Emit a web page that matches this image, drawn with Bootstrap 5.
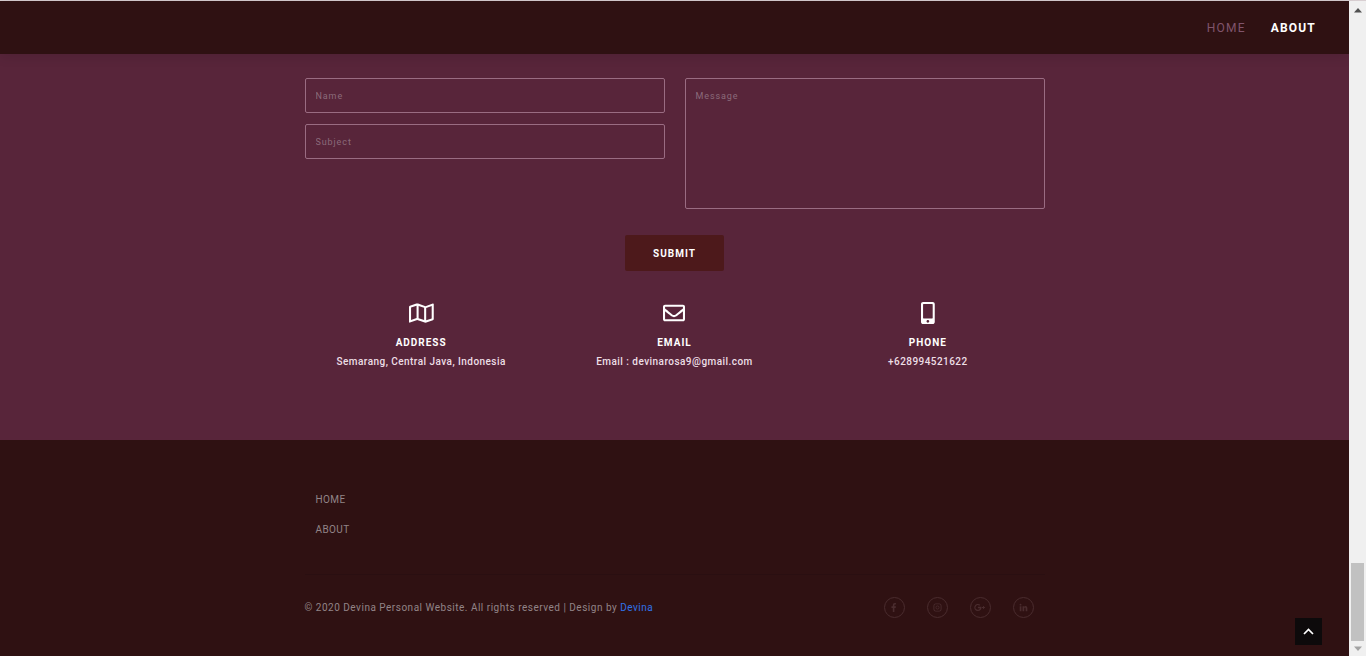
<!DOCTYPE html>
<html lang="en">
<head>
<meta charset="utf-8">
<meta name="viewport" content="width=device-width, initial-scale=1">
<title>Devina Personal Website</title>
<link rel="stylesheet" href="https://cdn.jsdelivr.net/npm/bootstrap@5.3.0/dist/css/bootstrap.min.css">
<style>
  body { font-family: Roboto, sans-serif; font-size: 10px; line-height: 20px; background: #2f1112; overflow: hidden; }
  a { text-decoration: none; }
  .window { border-top: 1px solid #d9cfd2; }
  .top-nav { background: #2f1112; padding: 17px 33px 15px 0; gap: 25px; box-shadow: 0 2px 12px rgba(0, 0, 0, .12); z-index: 2; }
  .top-nav a { font-size: 12px; line-height: 21px; letter-spacing: .1em; padding: 0; color: #80546c; }
  .top-nav a.active { color: #fff; font-weight: 700; }
  .contact { background: #58253a; padding: 24px 0 69px; }
  .wrap { max-width: 760px; padding: 0 10px; }
  .form-columns { gap: 20px; }
  .fields { gap: 11px; }
  .contact .form-control { background: transparent; border: 1px solid #9a6c82; border-radius: 2px; color: #fff; font-size: 9px; line-height: 15px; letter-spacing: .1em; padding: 10px 10px 8px; min-height: 35px; }
  .contact .form-control::placeholder { color: #8b6b7b; opacity: 1; }
  .contact textarea.form-control { height: 131px; resize: none; }
  .submit { background: #4d191b; color: #fff; border: 0; border-radius: 2px; font-size: 10px; line-height: 20px; font-weight: 700; letter-spacing: 1px; padding: 9px 28px 7px; margin: 26px 0; }
  .info { margin: 0 -10px; }
  .info svg { height: 22px; fill: #fff; margin: 5px 0 9px; }
  .info h2 { font-size: 10px; line-height: 20px; letter-spacing: 1px; font-weight: 700; color: #fff; margin: 0; }
  .info p { line-height: 18px; letter-spacing: .045em; font-weight: 500; color: #eddfe6; margin: 0; }
  .foot { padding-top: 50px; color: #928487; }
  .foot-links { gap: 10px; padding-bottom: 34px; border-bottom: 1px solid #2a0f11; }
  .foot-links a { color: #928487; padding: 0 11px; letter-spacing: .04em; }
  .legal { padding: 22px 11px 37px 0; letter-spacing: .05em; }
  .legal a { color: #2f72e8; }
  .social { gap: 22px; }
  .social a { width: 21px; height: 21px; border: 1px solid #4a2c2e; border-radius: 50%; }
  .social svg { height: 9px; fill: #4a2c2e; }
  .to-top { right: 27px; bottom: 11px; width: 27px; height: 27px; background: #0d0a0b; border: 0; padding: 0; }
  .to-top svg { width: 13px; height: 13px; fill: none; stroke: #fff; stroke-width: 1.700; }
  .track { width: 17px; background: #f0f0f0; padding: 7px 0 5px; z-index: 3; }
  .track svg { width: 8px; height: 5px; }
  .thumb { width: 13px; height: 78px; background: #c1c1c1; margin: auto 0 5px; }
</style>
</head>
<body>
<div class="window d-flex vh-100">
  <div class="flex-grow-1 d-flex flex-column position-relative">
    <nav class="top-nav navbar justify-content-end position-relative" aria-label="Main">
      <a class="nav-link" href="#home">HOME</a>
      <a class="nav-link active" href="#about">ABOUT</a>
    </nav>

    <main class="contact">
      <div class="wrap container">
        <form class="text-center">
          <div class="form-columns d-flex text-start">
            <div class="fields d-flex flex-column w-50">
              <input class="form-control" type="text" placeholder="Name" aria-label="Name">
              <input class="form-control" type="text" placeholder="Subject" aria-label="Subject">
            </div>
            <div class="w-50">
              <textarea class="form-control" placeholder="Message" aria-label="Message"></textarea>
            </div>
          </div>
          <button class="submit btn" type="button">SUBMIT</button>
        </form>
        <div class="info row gx-0 text-center">
          <section class="col-4">
            <svg viewBox="0 0 576 512" aria-hidden="true"><path d="M560.02 32c-1.96 0-3.98.37-5.96 1.16L384.01 96H384L212 35.28A64.25 64.25 0 0 0 191.76 32c-6.69 0-13.37 1.05-19.81 3.14L20.12 87.95A32 32 0 0 0 0 117.66v346.32C0 473.17 7.53 480 15.99 480c1.96 0 3.97-.37 5.96-1.16L192 416l172 60.71a63.98 63.98 0 0 0 40.05.15l151.83-52.81A32 32 0 0 0 576 394.34V48.02c0-9.19-7.53-16.02-15.98-16.02zM224 90.42l128 45.19v285.97l-128-45.19V90.42zM48 418.05V129.07l128-44.53v286.2l-.64.23L48 418.05zm480-35.13l-128 44.53V141.26l.64-.24L528 93.95v288.97z"/></svg>
            <h2>ADDRESS</h2>
            <p>Semarang, Central Java, Indonesia</p>
          </section>
          <section class="col-4">
            <svg viewBox="0 0 512 512" aria-hidden="true"><path d="M464 64H48C21.49 64 0 85.49 0 112v288c0 26.51 21.49 48 48 48h416c26.51 0 48-21.49 48-48V112c0-26.51-21.49-48-48-48zm0 48v40.805c-22.422 18.259-58.168 46.651-134.587 106.49-16.841 13.247-50.201 45.072-73.413 44.701-23.208.375-56.579-31.459-73.413-44.701C106.18 199.465 70.425 171.067 48 152.805V112h416zM48 400V214.398c22.914 18.251 55.409 43.862 104.938 82.646 21.857 17.205 60.134 55.186 103.062 54.955 42.717.231 80.509-37.199 103.053-54.947 49.528-38.783 82.032-64.401 104.947-82.653V400H48z"/></svg>
            <h2>EMAIL</h2>
            <p>Email : devinarosa9@gmail.com</p>
          </section>
          <section class="col-4">
            <svg viewBox="0 0 320 512" aria-hidden="true"><path d="M272 0H48C21.5 0 0 21.5 0 48v416c0 26.5 21.5 48 48 48h224c26.5 0 48-21.5 48-48V48c0-26.5-21.5-48-48-48zM160 480c-17.7 0-32-14.3-32-32s14.3-32 32-32 32 14.3 32 32-14.3 32-32 32zm112-108c0 6.6-5.4 12-12 12H60c-6.6 0-12-5.4-12-12V60c0-6.6 5.4-12 12-12h200c6.6 0 12 5.4 12 12v312z"/></svg>
            <h2>PHONE</h2>
            <p>+628994521622</p>
          </section>
        </div>
      </div>
    </main>

    <footer class="foot">
      <div class="wrap container">
        <nav class="foot-links d-flex flex-column align-items-start" aria-label="Footer">
          <a href="#home">HOME</a>
          <a href="#about">ABOUT</a>
        </nav>
        <div class="legal d-flex justify-content-between align-items-center">
          <span>© 2020 Devina Personal Website. All rights reserved | Design by <a href="#devina">Devina</a></span>
          <div class="social d-flex">
            <a class="d-flex align-items-center justify-content-center" href="#facebook" aria-label="Facebook"><svg viewBox="0 0 6 10"><path d="M2 10V5.500H.5V3.700H2V2.400C2 .9 2.900 0 4.200 0H5.500V1.600H4.700C4 1.600 3.800 2 3.800 2.500V3.700H5.500L5.200 5.500H3.800V10z"/></svg></a>
            <a class="d-flex align-items-center justify-content-center" href="#instagram" aria-label="Instagram"><svg viewBox="0 0 10 10"><path fill-rule="evenodd" d="M3 .5h4A2.500 2.500 0 0 1 9.500 3v4A2.500 2.500 0 0 1 7 9.500H3A2.500 2.500 0 0 1 .5 7V3A2.500 2.500 0 0 1 3 .5zm0 1A1.500 1.500 0 0 0 1.500 3v4A1.500 1.500 0 0 0 3 8.500h4A1.500 1.500 0 0 0 8.500 7V3A1.500 1.500 0 0 0 7 1.500zM5 2.800a2.200 2.200 0 1 1 0 4.400a2.200 2.200 0 0 1 0-4.400zm0 .8a1.400 1.400 0 1 0 0 2.800a1.400 1.400 0 0 0 0-2.800z"/></svg></a>
            <a class="d-flex align-items-center justify-content-center" href="#google" aria-label="Google Plus"><svg viewBox="0 0 13 10"><path d="M4.300 4.200H8.300C8.700 7 7 9 4.300 9A4 4 0 1 1 7 2L5.900 3.100A2.500 2.500 0 1 0 6.600 5.700H4.300zM10 3.300h1v1.200h1.200v1H11v1.200h-1V5.500H8.900v-1H10z"/></svg></a>
            <a class="d-flex align-items-center justify-content-center" href="#linkedin" aria-label="LinkedIn"><svg viewBox="0 0 10 10"><path d="M.8 3.500h1.900V9.300H.8zM1.700.8a1 1 0 1 1 0 2.100a1 1 0 0 1 0-2.100zM3.900 3.500h1.800v.8C6.700 2.900 9.300 3 9.300 5.900V9.300H7.400V6.200C7.400 4.600 5.800 4.700 5.800 6.200V9.300H3.900z"/></svg></a>
          </div>
        </div>
      </div>
    </footer>
    <button class="to-top position-absolute d-flex align-items-center justify-content-center" type="button" aria-label="Back to top"><svg viewBox="0 0 13 13"><path d="M2 9l4.500-4.500L11 9"/></svg></button>
  </div>
  <div class="track d-flex flex-column align-items-center flex-shrink-0" aria-hidden="true">
    <svg viewBox="0 0 8 5"><path d="M4 0l4 4.500H0z" fill="#505050"/></svg>
    <div class="thumb"></div>
    <svg viewBox="0 0 8 5"><path d="M4 5L0 .5h8z" fill="#a3a3a3"/></svg>
  </div>
</div>
<script src="https://cdn.jsdelivr.net/npm/bootstrap@5.3.0/dist/js/bootstrap.bundle.min.js"></script>
</body>
</html>
